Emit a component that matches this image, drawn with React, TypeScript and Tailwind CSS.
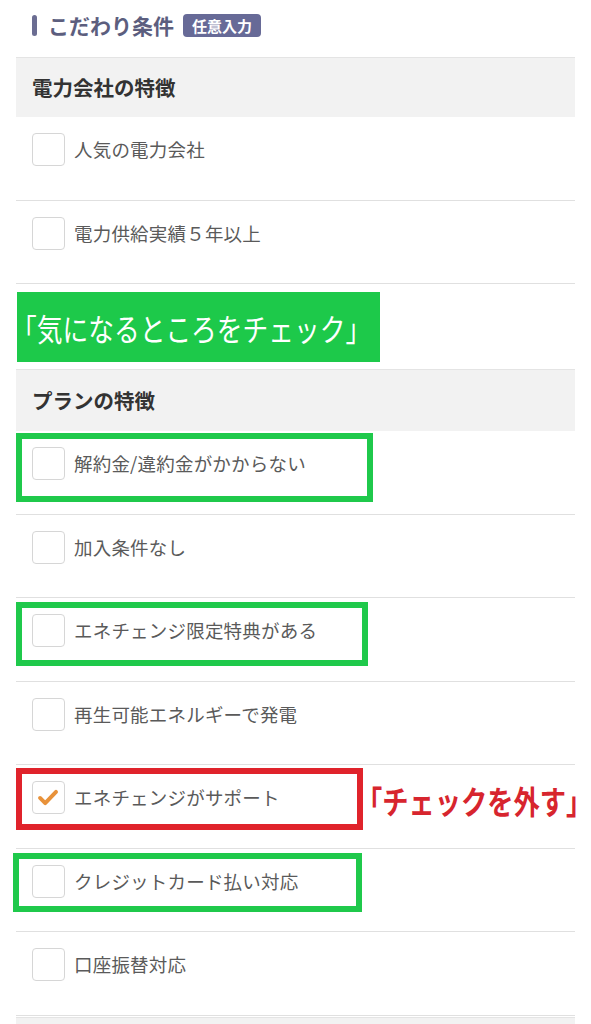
import React from "react";

type Mark = {
  color: string;
  left: number;
  width: number;
  top: number;
  height: number;
};

function Checkbox({ checked }: { checked?: boolean }) {
  return (
    <div className="w-[33px] h-[33px] shrink-0 rounded-[4px] border border-[#d6d6d6] bg-white flex items-center justify-center">
      {checked && (
        <svg width="33" height="33" viewBox="0 0 33 33">
          <path
            d="M7.5 17 L13 22.5 L24.5 10.5"
            fill="none"
            stroke="#e8923a"
            strokeWidth="4.2"
            strokeLinecap="round"
            strokeLinejoin="round"
          />
        </svg>
      )}
    </div>
  );
}

function Row({
  label,
  checked,
  mark,
  children,
}: {
  label: string;
  checked?: boolean;
  mark?: Mark;
  children?: React.ReactNode;
}) {
  return (
    <div className="relative h-[83.5px] border-b border-[#e0e0e0] pl-4 pt-[16px]">
      <div className="flex items-center gap-[9px] h-[33px]">
        <Checkbox checked={checked} />
        <span className="text-[18.5px] text-[#5a5a5a] leading-none tracking-[0.2px]">
          {label}
        </span>
      </div>
      {mark && (
        <div
          className="absolute border-[6px] pointer-events-none"
          style={{
            borderColor: mark.color,
            left: mark.left,
            width: mark.width,
            top: mark.top,
            height: mark.height,
          }}
        />
      )}
      {children}
    </div>
  );
}

function Header({ text, h }: { text: string; h: string }) {
  return (
    <div
      className={`${h} bg-[#f2f2f2] border-t border-[#e4e4e4] pl-4 flex items-center`}
    >
      <span className="text-[20.5px] font-bold text-[#333333] leading-none">
        {text}
      </span>
    </div>
  );
}

export default function App() {
  const green = "#1fc94b";
  const red = "#e0232b";
  return (
    <div className="w-[591px] h-[1024px] overflow-hidden bg-white px-4">
      <div className="font-['Noto_Sans_CJK_JP','Noto_Sans',sans-serif]">
        {/* Title */}
        <div className="pt-[14px] pl-4 h-[57px]">
          <div className="flex items-center h-[23px]">
            <div className="w-[5px] h-[21px] rounded-full bg-[#6b6d92]" />
            <span className="ml-[11px] text-[21px] font-bold text-[#5c5e7e] leading-none">
              こだわり条件
            </span>
            <span className="ml-[9px] h-[23px] px-[9px] rounded-[4px] bg-[#676a97] text-white text-[15px] font-bold leading-[23px]">
              任意入力
            </span>
          </div>
        </div>

        <Header text="電力会社の特徴" h="h-[60px]" />
        <Row label="人気の電力会社" />
        <Row label="電力供給実績５年以上" />

        {/* Green banner */}
        <div className="mt-[8px] ml-[1px] w-[363px] h-[70px] bg-[#1dc94a] flex items-center overflow-visible">
          <span className="inline-block origin-left scale-x-[0.83] text-[31px] text-white leading-none whitespace-nowrap -ml-[6px]">
            「気になるところをチェック」
          </span>
        </div>

        <div className="mt-[7px]">
          <Header text="プランの特徴" h="h-[62px]" />
        </div>
        <Row
          label="解約金/違約金がかからない"
          mark={{ color: green, left: 0, width: 357, top: 2, height: 69 }}
        />
        <Row label="加入条件なし" />
        <Row
          label="エネチェンジ限定特典がある"
          mark={{ color: green, left: 0, width: 352, top: 4, height: 64 }}
        />
        <Row label="再生可能エネルギーで発電" />
        <Row
          label="エネチェンジがサポート"
          checked
          mark={{ color: red, left: 0, width: 347, top: 3, height: 62 }}
        >
          <div className="absolute left-[340px] top-[15px] h-[40px] flex items-center">
            <span className="inline-block origin-left scale-x-[0.82] text-[32px] font-bold text-[#d7252e] leading-none whitespace-nowrap">
              「チェックを外す」
            </span>
          </div>
        </Row>
        <Row
          label="クレジットカード払い対応"
          mark={{ color: green, left: -3, width: 349, top: 4, height: 59 }}
        />
        <Row label="口座振替対応" />
        <div className="mt-[1px] h-[40px] bg-[#f2f2f2] border-t border-[#e4e4e4]" />
      </div>
    </div>
  );
}
